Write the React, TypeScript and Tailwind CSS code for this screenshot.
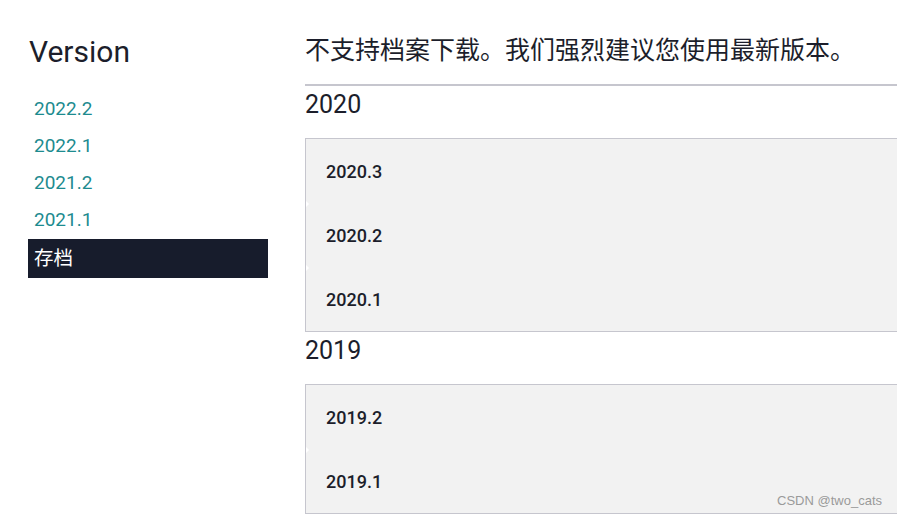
const VERSIONS = ['2022.2', '2022.1', '2021.2', '2021.1'];

const ARCHIVE = [
  { year: '2020', items: ['2020.3', '2020.2', '2020.1'] },
  { year: '2019', items: ['2019.2', '2019.1'] },
];

const font = { fontFamily: 'Roboto, "Noto Sans CJK SC", sans-serif' };

function ReleaseBox({ items }: { items: string[] }) {
  return (
    <div className="border border-r-0 border-[#c6c6ce] bg-[#f2f2f2]">
      {items.map((v, i) => (
        <div key={v} className="relative flex h-16 items-center pl-5 text-[18px] font-medium text-[#1c1e2b]">
          {/* 左侧小三角 */}
          {i > 0 && (
            <span className="absolute -top-[2px] left-0 h-0 w-0 border-y-[3px] border-l-[3px] border-y-transparent border-l-white" />
          )}
          {v}
        </div>
      ))}
    </div>
  );
}

export default function App() {
  return (
    <div className="relative flex h-[519px] w-[897px] overflow-hidden bg-white" style={font}>
      {/* 侧边栏 */}
      <aside className="ml-[28px] w-[240px] shrink-0 pt-[34px]">
        <h2 className="pl-px text-[30px] leading-[36px] text-[#1c1e2b]">Version</h2>
        <ul className="mt-[21px]">
          {VERSIONS.map((v) => (
            <li key={v} className="flex h-[37px] items-center pl-[6px] text-[19px] text-[#1d8b8f]">
              {v}
            </li>
          ))}
          <li className="flex h-[39px] items-center bg-[#171c2c] pl-[6px] text-[19.5px] text-white">存档</li>
        </ul>
      </aside>

      {/* 内容 */}
      <main className="ml-[37px] flex-1 pt-[35px]">
        <div className="border-b-2 border-[#c6c6ce] pb-[17px] text-[25px] leading-[32px] text-[#1c1e2b]">
          不支持档案下载。我们强烈建议您使用最新版本。
        </div>
        {ARCHIVE.map((group) => (
          <section key={group.year}>
            <h3 className="mb-[17px] pt-[3px] text-[25px] leading-[32px] text-[#1c1e2b]">{group.year}</h3>
            <ReleaseBox items={group.items} />
          </section>
        ))}
      </main>

      <span
        className="absolute bottom-[9px] right-[15px] text-[13px] text-[#9a9a9a]"
        style={{ fontFamily: '"Liberation Sans", Arial, sans-serif' }}
      >
        CSDN @two_cats
      </span>
    </div>
  );
}
